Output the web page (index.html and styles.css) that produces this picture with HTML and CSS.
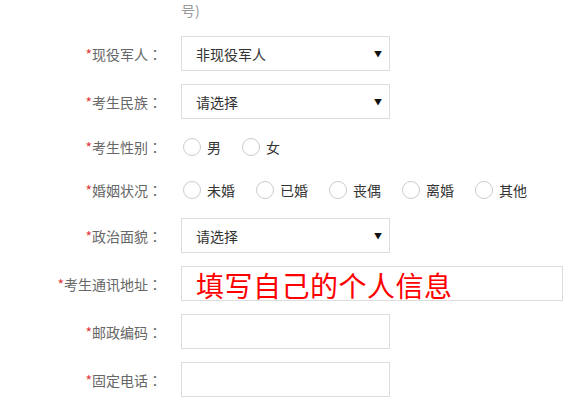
FILE: index.html
```html
<!DOCTYPE html>
<html>
<head>
    <title>考生信息</title>
    <link rel="stylesheet" href="styles.css">
</head>
<body>
    <div class="form">
        <div class="hint">号)</div>

        <div class="row">
            <label class="lbl"><span class="req">*</span>现役军人<span class="colon">：</span></label>
            <div class="select">非现役军人<span class="arrow">▼</span></div>
        </div>

        <div class="row">
            <label class="lbl"><span class="req">*</span>考生民族<span class="colon">：</span></label>
            <div class="select">请选择<span class="arrow">▼</span></div>
        </div>

        <div class="row radio-row">
            <label class="lbl"><span class="req">*</span>考生性别<span class="colon">：</span></label>
            <div class="radios">
                <span class="opt"><i class="circle"></i>男</span>
                <span class="opt"><i class="circle"></i>女</span>
            </div>
        </div>

        <div class="row radio-row">
            <label class="lbl"><span class="req">*</span>婚姻状况<span class="colon">：</span></label>
            <div class="radios">
                <span class="opt"><i class="circle"></i>未婚</span>
                <span class="opt"><i class="circle"></i>已婚</span>
                <span class="opt"><i class="circle"></i>丧偶</span>
                <span class="opt"><i class="circle"></i>离婚</span>
                <span class="opt"><i class="circle"></i>其他</span>
            </div>
        </div>

        <div class="row">
            <label class="lbl"><span class="req">*</span>政治面貌<span class="colon">：</span></label>
            <div class="select">请选择<span class="arrow">▼</span></div>
        </div>

        <div class="row">
            <label class="lbl"><span class="req">*</span>考生通讯地址<span class="colon">：</span></label>
            <div class="input wide"><span class="note">填写自己的个人信息</span></div>
        </div>

        <div class="row">
            <label class="lbl"><span class="req">*</span>邮政编码<span class="colon">：</span></label>
            <div class="input"></div>
        </div>

        <div class="row">
            <label class="lbl"><span class="req">*</span>固定电话<span class="colon">：</span></label>
            <div class="input"></div>
        </div>
    </div>
</body>
</html>
```

FILE: styles.css
```css
body {
    margin: 0;
    background: #fff;
    font-family: "Noto Sans CJK SC", "Liberation Sans", sans-serif;
    font-size: 14px;
    color: #333;
}
.form {
    width: 567px;
}
.hint {
    padding-left: 181px;
    height: 20px;
    line-height: 20px;
    margin-bottom: 16px;
    color: #999;
}
.row {
    display: flex;
    align-items: center;
    height: 35px;
    margin-bottom: 13px;
}
.radio-row {
    height: 30px;
}
.lbl {
    width: 162px;
    margin-right: 19px;
    text-align: right;
    color: #666;
    white-space: nowrap;
}
.colon {
    font-family: "Noto Sans CJK TC", sans-serif;
}
.req {
    color: #e4393c;
}
.select,
.input {
    box-sizing: border-box;
    width: 209px;
    height: 35px;
    border: 1px solid #ddd;
    background: #fff;
}
.select {
    display: flex;
    align-items: center;
    justify-content: space-between;
    padding: 0 7px 0 14px;
    color: #333;
}
.arrow {
    font-size: 8px;
    color: #111;
}
.wide {
    width: 382px;
    padding-left: 14px;
}
.note {
    display: block;
    font-size: 28px;
    line-height: 28px;
    margin-top: 4px;
    color: #f00;
    letter-spacing: 0.5px;
    white-space: nowrap;
}
.radios {
    display: flex;
    align-items: center;
    padding-left: 2px;
}
.opt {
    display: flex;
    align-items: center;
    margin-right: 21px;
    color: #333;
}
.circle {
    box-sizing: border-box;
    width: 18px;
    height: 18px;
    border: 1px solid #ccc;
    border-radius: 50%;
    margin-right: 6px;
}
```
